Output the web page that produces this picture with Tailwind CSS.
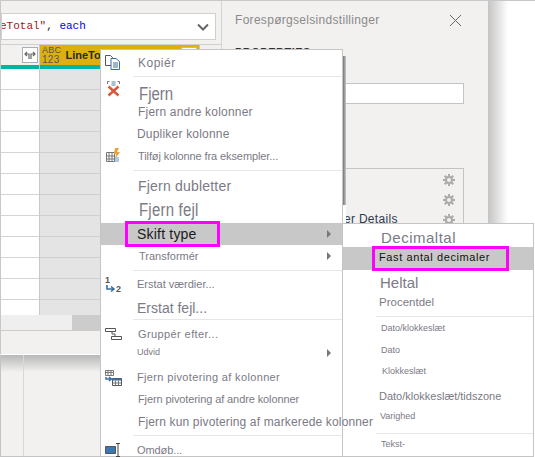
<!DOCTYPE html>
<html><head><meta charset="utf-8"><script src="https://cdn.jsdelivr.net/npm/@tailwindcss/browser@4"></script></head>
<body class="bg-white">
<div class="relative w-[535px] h-[457px] overflow-hidden bg-white font-['Liberation_Sans',sans-serif] text-[#7b7a85]">
  <!-- top line and shadow right of the window -->
  <div class="absolute left-0 top-0 w-[535px] h-px bg-[#c8c8c8]"></div>
  <div class="absolute left-[488px] top-px w-[20px] h-[222px] bg-gradient-to-r from-[#c4c4c4] to-white"></div>

  <!-- window behind, lower left -->
  <div class="absolute left-0 top-[355px] w-[101px] h-[102px] bg-[#f2f1f0] border-l border-b border-[#c4c4c4]">
    <div class="absolute left-0 top-0 w-full h-[17px] bg-gradient-to-b from-[#b8b8b8] to-[#f2f1f0]"></div>
    <div class="absolute left-[22px] top-0 w-px h-full bg-[#d8d8d8]"></div>
  </div>

  <!-- main window -->
  <div class="absolute left-0 top-px w-[488px] h-[354px] bg-[#f2f1f0] border-b border-white border-l border-l-[#c8c8c8]">
    <div class="flex h-full">
      <div class="w-[221px] border-r border-[#d4d4d4] flex flex-col">
        <div class="h-[44px] pt-[12px] pr-[5px] border-b border-[#d0d0d0]">
          <div class="h-[27px] bg-white border border-[#cfcfcf] flex items-center justify-between pr-[6px] font-['Liberation_Mono',monospace] text-[11px] leading-none overflow-hidden"><span class="text-[#a31515] -ml-[2px]">eTotal"<span class="text-[#222]">, </span><span class="text-[#0000ee]">each</span></span>
            <svg width="12" height="8" viewBox="0 0 12 8"><path d="M1 1.500l5 5 5-5" fill="none" stroke="#666" stroke-width="2"/></svg></div>
        </div>
        <div class="flex-1 flex flex-col">
          <div class="flex h-[270px]">
            <div class="w-[39px] flex flex-col border-r border-[#c8c8c8] bg-white">
              <div class="h-[20px] bg-[#f2f1f0] flex justify-end items-center pr-[1px]"><div class="w-[16px] h-[16px] border-[1.5px] border-[#a9afb6] bg-white flex items-center justify-center"><svg width="12" height="9" viewBox="0 0 12 9"><path d="M5 8V3H1M3 1L1 3l2 2M7 8V3h4M9 1l2 2-2 2" fill="none" stroke="#666" stroke-width="1.200"/></svg></div></div>
              <div class="h-[4px] bg-[#00b5a5]"></div>
              <div class="h-[21px] border-b border-[#d4d4d4]"></div><div class="h-[21px] border-b border-[#d4d4d4]"></div><div class="h-[21px] border-b border-[#d4d4d4]"></div><div class="h-[21px] border-b border-[#d4d4d4]"></div><div class="h-[21px] border-b border-[#d4d4d4]"></div><div class="h-[21px] border-b border-[#d4d4d4]"></div><div class="h-[21px] border-b border-[#d4d4d4]"></div><div class="h-[21px] border-b border-[#d4d4d4]"></div><div class="h-[21px] border-b border-[#d4d4d4]"></div><div class="h-[21px] border-b border-[#d4d4d4]"></div><div class="h-[21px] border-b border-[#d4d4d4]"></div>
            </div>
            <div class="w-[160px] flex flex-col border-r border-[#c8c8c8]">
              <div class="relative h-[20px] bg-[#dcb10f] flex items-center pl-[2px] gap-[4px]"><span class="text-[9px] leading-[9px] text-[#555] tracking-[0.3px]">ABC<br><span class="text-[10px]">123</span></span><span class="text-[11px] font-bold text-[#2a2a2a]">LineTotal</span><span class="absolute left-[141px] top-[2px] w-[16px] h-[14px] bg-white border border-[#bbb]"></span></div>
              <div class="h-[4px] bg-[#00b5a5]"></div>
              <div class="flex-1 bg-[repeating-linear-gradient(180deg,#e4e4e4_0,#e4e4e4_20px,#d0d0d0_20px,#d0d0d0_21px)]"></div>
            </div>
            <div class="flex-1"></div>
          </div>
          <div class="h-[16px] bg-[#efefef] border-b border-[#cccccc] flex"><div class="w-[71px]"></div><div class="w-[30px] bg-[#cccccc]"></div></div>
        </div>
      </div>
      <div class="flex-1 relative px-[13px] pt-[11px]">
        <div class="flex justify-between items-center pr-[13px] h-[16px] text-[12px] text-[#8a8a8a] tracking-[0.3px]"><span>Forespørgselsindstillinger</span>
          <svg width="13" height="13" viewBox="0 0 13 13"><path d="M1 1l11 11M12 1L1 12" stroke="#666" fill="none" stroke-width="1"/></svg></div>
        <div class="mt-[21px] text-[11px] font-bold text-[#333] tracking-[0.5px] leading-[6px]">PROPERTIES</div>
        <div class="mt-[28px] mr-[11px] h-[21px] bg-white border border-[#c4c4c4]"></div>
        <div class="mt-[64px] mr-[11px] h-[70px] border border-[#c4c4c4] flex flex-col items-end pr-[8px] pt-[5px] gap-[8px]">
          <svg width="12" height="12" viewBox="0 0 12 12"><g stroke="#ababab" stroke-width="2" fill="none"><circle cx="6" cy="6" r="3"/><path d="M6 0v2.500M6 9.500V12M0 6h2.500M9.500 6H12M1.700 1.700l1.800 1.800M8.500 8.500l1.800 1.800M10.300 1.700L8.500 3.500M3.500 8.500l-1.800 1.800"/></g></svg>
          <svg width="12" height="12" viewBox="0 0 12 12"><g stroke="#ababab" stroke-width="2" fill="none"><circle cx="6" cy="6" r="3"/><path d="M6 0v2.500M6 9.500V12M0 6h2.500M9.500 6H12M1.700 1.700l1.800 1.800M8.500 8.500l1.800 1.800M10.300 1.700L8.500 3.500M3.500 8.500l-1.800 1.800"/></g></svg>
          <svg width="12" height="12" viewBox="0 0 12 12"><g stroke="#ababab" stroke-width="2" fill="none"><circle cx="6" cy="6" r="3"/><path d="M6 0v2.500M6 9.500V12M0 6h2.500M9.500 6H12M1.700 1.700l1.800 1.800M8.500 8.500l1.800 1.800M10.300 1.700L8.500 3.500M3.500 8.500l-1.800 1.800"/></g></svg>
        </div>
        <div class="absolute left-[122px] top-[211px] text-[12px] text-[#2f3a4f] leading-[14px] tracking-[0.3px] whitespace-nowrap">er Details</div>
      </div>
    </div>
  </div>

  <!-- menu shadow, white notch beside it -->
  <div class="absolute left-[343px] top-[56px] w-[3px] h-[149px] bg-gradient-to-r from-[#777] to-[#c8c8c8]"></div>
  <div class="absolute left-[343px] top-[205px] w-[3px] h-[18px] bg-white"></div>

  <!-- context menu -->
  <div class="absolute left-[100px] top-[49px] w-[243px] h-[408px] bg-white border border-[#c4c4c4] text-[12px] tracking-[0.2px]">
    <div class="relative flex flex-col">
      <div class="flex h-[26px] items-center pl-[37px] tracking-[0.5px]">Kopiér</div>
      <div class="ml-[32px] h-px bg-[#e6e6e6]"></div>
      <div class="flex h-[26px] items-end pl-[38px] text-[15px] tracking-[0] leading-[19px]"><span class="inline-block scale-y-125">Fjern</span></div>
      <div class="flex h-[18px] items-center pl-[37px]">Fjern andre kolonner</div>
      <div class="flex h-[26px] items-center pl-[36px]">Dupliker kolonne</div>
      <div class="flex h-[18px] mb-[5px] items-center pl-[37px] text-[11px] tracking-[-0.1px]">Tilføj kolonne fra eksempler...</div>
      <div class="ml-[32px] h-px bg-[#e6e6e6]"></div>
      <div class="flex h-[30px] items-center pl-[37px] text-[14px] tracking-[0.2px]">Fjern dubletter</div>
      <div class="flex h-[18px] mb-[4px] items-center pl-[38px] text-[15px]"><span class="inline-block scale-y-125">Fjern fejl</span></div>
      <div class="flex h-[22px] items-center pl-[36px] bg-[#c8c8c8] justify-between pr-[11px] text-[14px] text-[#1a1a1a] tracking-[0.2px]"><span>Skift type</span><span class="w-0 h-0 border-y-[4px] border-y-transparent border-l-[4px] border-l-[#777]"></span></div>
      <div class="flex h-[22px] mb-[3px] items-center pl-[38px] justify-between pr-[11px] text-[11px] tracking-[0]"><span>Transformér</span><span class="w-0 h-0 border-y-[4px] border-y-transparent border-l-[4px] border-l-[#777]"></span></div>
      <div class="ml-[32px] h-px bg-[#e6e6e6]"></div>
      <div class="flex h-[26px] items-center pl-[36px] text-[11px] tracking-[0]">Erstat værdier...</div>
      <div class="flex h-[22px] items-center pl-[36px] text-[14px] tracking-[0]">Erstat fejl...</div>
      <div class="ml-[32px] h-px bg-[#e6e6e6]"></div>
      <div class="flex h-[28px] items-center pl-[37px] text-[11px] tracking-[0.4px]">Gruppér efter...</div>
      <div class="flex h-[10px] items-center pl-[36px] justify-between pr-[11px] text-[9px] tracking-[0]"><span>Udvid</span><span class="w-0 h-0 border-y-[4px] border-y-transparent border-l-[4px] border-l-[#777]"></span></div>
      <div class="flex h-[24px] mt-[7px] items-center pl-[36px] text-[11px] tracking-[0.35px]">Fjern pivotering af kolonner</div>
      <div class="flex h-[20px] items-center pl-[37px] text-[11px] tracking-[-0.1px]">Fjern pivotering af andre kolonner</div>
      <div class="flex h-[26px] items-center pl-[37px] text-[12px] tracking-[0.15px] whitespace-nowrap relative z-20">Fjern kun pivotering af markerede kolonner</div>
      <div class="ml-[32px] h-px bg-[#e6e6e6]"></div>
      <div class="flex h-[28px] items-center pl-[36px] text-[11px] tracking-[-0.1px]">Omdøb...</div>

      <!-- icons -->
      <svg class="absolute left-[4px] top-[5px]" width="16" height="15" viewBox="0 0 16 15"><path d="M.5.5h5l2 2v8h-7z" fill="#fff" stroke="#555"/><path d="M6 3.500h5l3.500 3v8H6z" fill="#fff" stroke="#3a6ea5"/><path d="M8 8h5M8 10h5M8 12h5" stroke="#3a6ea5"/></svg>
      <svg class="absolute left-[6px] top-[31px]" width="13" height="16" viewBox="0 0 13 16"><path d="M.5 3V.5h2M12.500 3V.5h-2" stroke="#777" fill="none"/><rect x="4.500" y="0" width="4" height="5" fill="#a9bfd4"/><path d="M1.500 5.500l10 9M11.500 5.500l-10 9" stroke="#d9583a" stroke-width="2.400"/></svg>
      <svg class="absolute left-[5px] top-[98px]" width="14" height="15" viewBox="0 0 14 15"><path d="M.5 4.500h8v9h-8zM.5 8h8M.5 11h8M3 4.500v9M6 4.500v9" fill="#fff" stroke="#777"/><path d="M9 0h4l-2 4h3l-5 7 1-5H8z" fill="#e8a33d"/><rect x="9" y="9" width="4" height="5" fill="#a9cbe6"/></svg>
      <div class="absolute left-[4px] top-[226px] font-bold text-[9px] leading-none text-[#555] tracking-[0]">1</div>
      <svg class="absolute left-[5px] top-[235px]" width="10" height="8" viewBox="0 0 10 8"><path d="M1 0v4h6M5 1.500l3 2.500-3 2.500" fill="none" stroke="#3a6ea5" stroke-width="1.600"/></svg>
      <div class="absolute left-[15px] top-[235px] font-bold text-[9px] leading-none text-[#555] tracking-[0]">2</div>
      <svg class="absolute left-[4px] top-[278px]" width="17" height="12" viewBox="0 0 17 12"><path d="M.5.5h10v3H.5zM6.500 8.500h10v3h-10zM7 3.500V6h3v2.500" fill="#fff" stroke="#555"/></svg>
      <svg class="absolute left-[4px] top-[320px]" width="17" height="16" viewBox="0 0 17 16"><path d="M.5.5h8v5h-8zM.5 2.500h8M3 .5v5M6 .5v5" fill="#fff" stroke="#777"/><path d="M1 7v2h5M4 7l2.500 2L4 11" fill="none" stroke="#3a6ea5" stroke-width="1.500"/><path d="M7.500 8.500h9v7h-9z" fill="#fff" stroke="#555"/><path d="M7.500 8.500h9v2h-9z" fill="#3a6ea5"/><path d="M7.500 13h9M10.500 10.500v5M13.500 10.500v5" stroke="#777"/></svg>
      <svg class="absolute left-[4px] top-[393px]" width="17" height="14" viewBox="0 0 17 14"><path d="M.5 3.500h10v7H.5z" fill="#3a78b5" stroke="#555"/><path d="M11 .5h4M11 13.500h4M13 .5v13" stroke="#444" fill="none"/></svg>
    </div>
  </div>

  <!-- highlight 1 -->
  <div class="absolute left-[125px] top-[221px] w-[95px] h-[26px] border-[3px] border-[#ff00ff]"></div>

  <!-- submenu -->
  <div class="absolute left-[342px] top-[223px] w-[192px] h-[234px] bg-white border border-[#c4c4c4] text-[#7b7a85]">
    <div class="flex flex-col">
      <div class="flex h-[23px] items-end pl-[38px] text-[15px] tracking-[0.5px] leading-[18px]">Decimaltal</div>
      <div class="flex h-[23px] pb-[2px] items-center pl-[36px] bg-[#c8c8c8] text-[11px] text-[#111] tracking-[0.6px]">Fast antal decimaler</div>
      <div class="flex h-[26px] items-center pl-[37px] text-[15px]">Heltal</div>
      <div class="flex h-[14px] mb-[6px] items-center pl-[36px] text-[11.500px] tracking-[0]">Procentdel</div>
      <div class="ml-[33px] h-px bg-[#e6e6e6]"></div>
      <div class="flex h-[24px] items-center pl-[38px] text-[9px]">Dato/klokkeslæt</div>
      <div class="flex h-[20px] items-center pl-[38px] text-[9px]">Dato</div>
      <div class="flex h-[22px] items-center pl-[39px] text-[9px]">Klokkeslæt</div>
      <div class="flex h-[26px] items-center pl-[36px] text-[11px]">Dato/klokkeslæt/tidszone</div>
      <div class="flex h-[16px] mb-[8px] items-center pl-[37px] text-[9px]">Varighed</div>
      <div class="ml-[33px] h-px bg-[#e6e6e6]"></div>
      <div class="flex h-[22px] items-center pl-[38px] text-[9px]">Tekst-</div>
    </div>
  </div>
  <div class="absolute left-[372px] top-[246px] w-[137px] h-[25px] border-[3px] border-[#ff00ff]"></div>
</div>
</body></html>
